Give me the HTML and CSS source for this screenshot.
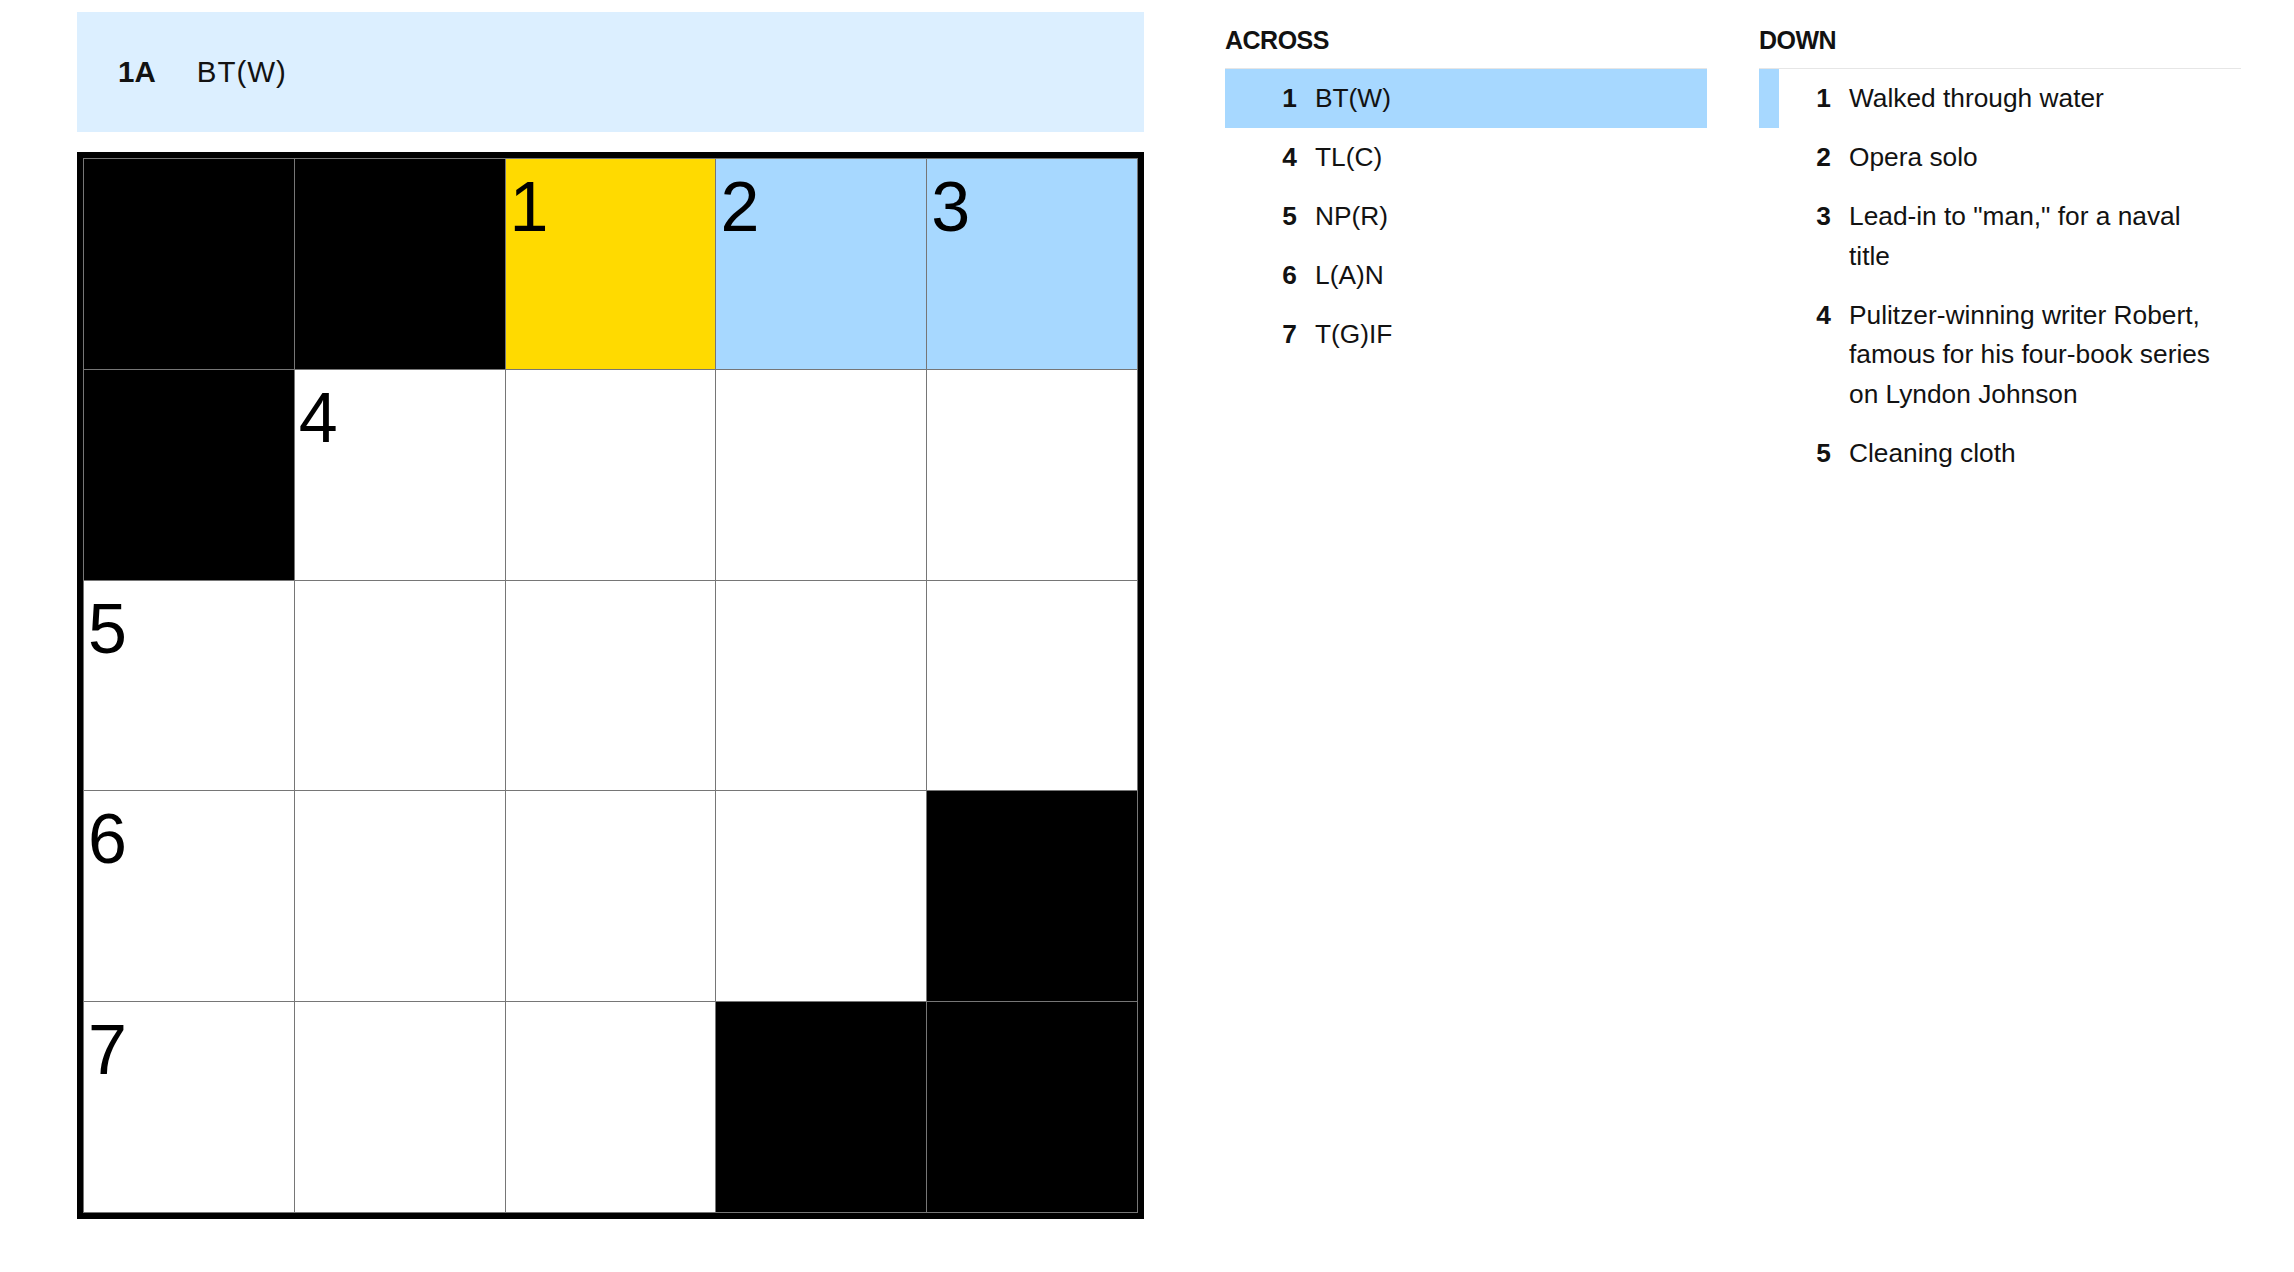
FILE: index.html
```html
<!DOCTYPE html>
<html lang="en">
<head>
  <meta charset="UTF-8" />
  <meta name="viewport" content="width=device-width, initial-scale=1.0" />
  <title>The Mini Crossword</title>
  <link rel="stylesheet" href="styles.css">
</head>
<body>

<div class="app">
  <section class="board">
    <div class="clue-bar">
      <span class="clue-bar-label">1A</span>
      <span class="clue-bar-text">BT(W)</span>
    </div>

    <div class="grid">
      <div class="cell block"></div>
      <div class="cell block"></div>
      <div class="cell active"><span class="cell-num">1</span></div>
      <div class="cell word"><span class="cell-num">2</span></div>
      <div class="cell word"><span class="cell-num">3</span></div>

      <div class="cell block"></div>
      <div class="cell"><span class="cell-num">4</span></div>
      <div class="cell"></div>
      <div class="cell"></div>
      <div class="cell"></div>

      <div class="cell"><span class="cell-num">5</span></div>
      <div class="cell"></div>
      <div class="cell"></div>
      <div class="cell"></div>
      <div class="cell"></div>

      <div class="cell"><span class="cell-num">6</span></div>
      <div class="cell"></div>
      <div class="cell"></div>
      <div class="cell"></div>
      <div class="cell block"></div>

      <div class="cell"><span class="cell-num">7</span></div>
      <div class="cell"></div>
      <div class="cell"></div>
      <div class="cell block"></div>
      <div class="cell block"></div>
    </div>
  </section>

  <section class="clue-lists">
    <div class="clue-list">
      <h3 class="clue-list-title">ACROSS</h3>
      <ol class="clue-list-items">
        <li class="clue selected"><span class="clue-num">1</span><span class="clue-text">BT(W)</span></li>
        <li class="clue"><span class="clue-num">4</span><span class="clue-text">TL(C)</span></li>
        <li class="clue"><span class="clue-num">5</span><span class="clue-text">NP(R)</span></li>
        <li class="clue"><span class="clue-num">6</span><span class="clue-text">L(A)N</span></li>
        <li class="clue"><span class="clue-num">7</span><span class="clue-text">T(G)IF</span></li>
      </ol>
    </div>

    <div class="clue-list">
      <h3 class="clue-list-title">DOWN</h3>
      <ol class="clue-list-items">
        <li class="clue related"><span class="clue-num">1</span><span class="clue-text">Walked through water</span></li>
        <li class="clue"><span class="clue-num">2</span><span class="clue-text">Opera solo</span></li>
        <li class="clue"><span class="clue-num">3</span><span class="clue-text">Lead-in to "man," for a naval title</span></li>
        <li class="clue"><span class="clue-num">4</span><span class="clue-text">Pulitzer-winning writer Robert, famous for his four-book series on Lyndon Johnson</span></li>
        <li class="clue"><span class="clue-num">5</span><span class="clue-text">Cleaning cloth</span></li>
      </ol>
    </div>
  </section>
</div>

</body>
</html>
```

FILE: styles.css
```css
html, body {
  margin: 0;
  padding: 0;
  background: #ffffff;
  color: #121212;
  font-family: "Liberation Sans", Arial, sans-serif;
}

.app {
  display: flex;
  align-items: flex-start;
  padding: 12px 0 0 77px;
}

/* left side: current clue + grid */
.board {
  width: 1067px;
  flex: none;
}

.clue-bar {
  display: flex;
  align-items: center;
  height: 120px;
  padding-left: 41px;
  background: #dcefff;
  font-size: 29.5px;
  box-sizing: border-box;
}

.clue-bar-label {
  font-weight: bold;
  margin-right: 41px;
}

.clue-bar-text {
  letter-spacing: 1px;
}

.grid {
  display: grid;
  grid-template-columns: repeat(5, 1fr);
  grid-template-rows: repeat(5, 1fr);
  gap: 1px;
  width: 1067px;
  height: 1067px;
  margin-top: 20px;
  padding: 1px;
  border: 6px solid #000;
  background: #767676;
  box-sizing: border-box;
}

.cell {
  background: #ffffff;
  padding: 8px 0 0 4px;
  font-size: 70px;
  color: #000;
}

.cell.block {
  background: #000;
}

.cell.active {
  background: #ffda00;
}

.cell.word {
  background: #a7d8ff;
}

/* right side: clue lists */
.clue-lists {
  display: flex;
  gap: 52px;
  margin-left: 81px;
}

.clue-list {
  width: 482px;
}

.clue-list-title {
  margin: 13px 0 13px;
  font-size: 25px;
  line-height: 30px;
  letter-spacing: -0.5px;
  font-weight: bold;
}

.clue-list-items {
  list-style: none;
  margin: 0;
  padding: 0;
  border-top: 1.5px solid #e6e6e6;
}

.clue {
  display: flex;
  padding: 10px 20px 9.5px 0;
  border-left: 20px solid transparent;
  font-size: 26.3px;
  line-height: 39.5px;
}

.clue.selected {
  background: #a7d8ff;
}

.clue.related {
  border-left-color: #a7d8ff;
}

.clue-num {
  flex: none;
  width: 52px;
  text-align: right;
  font-weight: bold;
}

.clue-text {
  margin-left: 18px;
}
```
